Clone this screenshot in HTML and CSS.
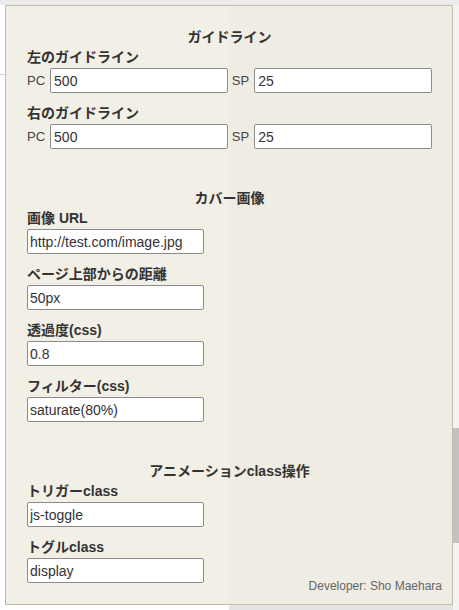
FILE: index.html
```html
<!DOCTYPE html>
<html lang="ja">
<head>
<meta charset="utf-8">
<title>Settings</title>
<link rel="stylesheet" href="styles.css">
</head>
<body>
<div class="page">
  <div class="topbar"></div>
  <div class="content">
    <div class="col-left"><div class="rule"></div></div>
    <div class="col-right"></div>
    <div class="scroll"><div class="thumb"></div></div>
  </div>
</div>

<div class="panel">
  <section class="sec">
    <h2 class="sec-title">ガイドライン</h2>
    <div class="field">
      <div class="label">左のガイドライン</div>
      <div class="pair">
        <span class="tag tag-pc">PC</span><input class="inp" type="text" value="500"><span class="tag tag-sp">SP</span><input class="inp" type="text" value="25">
      </div>
    </div>
    <div class="field">
      <div class="label">右のガイドライン</div>
      <div class="pair">
        <span class="tag tag-pc">PC</span><input class="inp" type="text" value="500"><span class="tag tag-sp">SP</span><input class="inp" type="text" value="25">
      </div>
    </div>
  </section>

  <section class="sec">
    <h2 class="sec-title">カバー画像</h2>
    <div class="field">
      <div class="label">画像 URL</div>
      <input class="inp inp-short" type="text" value="http://test.com/image.jpg">
    </div>
    <div class="field">
      <div class="label">ページ上部からの距離</div>
      <input class="inp inp-short" type="text" value="50px">
    </div>
    <div class="field">
      <div class="label">透過度(css)</div>
      <input class="inp inp-short" type="text" value="0.8">
    </div>
    <div class="field">
      <div class="label">フィルター(css)</div>
      <input class="inp inp-short" type="text" value="saturate(80%)">
    </div>
  </section>

  <section class="sec">
    <h2 class="sec-title">アニメーションclass操作</h2>
    <div class="last-row">
      <div class="fields">
        <div class="field">
          <div class="label">トリガーclass</div>
          <input class="inp inp-short" type="text" value="js-toggle">
        </div>
        <div class="field">
          <div class="label">トグルclass</div>
          <input class="inp inp-short" type="text" value="display">
        </div>
      </div>
      <div class="credit">Developer: Sho Maehara</div>
    </div>
  </section>
</div>
</body>
</html>
```

FILE: styles.css
```css
* { box-sizing: border-box; }
html, body { margin: 0; padding: 0; }
body {
  width: 459px;
  height: 610px;
  overflow: hidden;
  background: #fff;
  font-family: "Liberation Sans", "Noto Sans CJK JP", sans-serif;
  color: #333;
}

/* background page */
.page { display: flex; flex-direction: column; height: 610px; }
.topbar { height: 5px; background: #ebebeb; }
.content { flex: 1; display: flex; }
.col-left { width: 229px; background: #fff; }
.col-left .rule { height: 70px; border-bottom: 1px solid #d4d4d4; }
.col-right { flex: 1; background: #e4e4e4; }
.scroll { width: 6px; background: #f3f3f3; display: flex; flex-direction: column; }
.thumb { margin-top: 423px; height: 115px; background: #c1c1c1; }

/* overlay panel */
.panel {
  position: absolute;
  top: 5px;
  left: 5px;
  width: 448px;
  border: 1px solid #c4bda6;
  background: rgba(240, 237, 226, 0.88);
  padding: 21px 20px 11px 21px;
}
.sec { display: flow-root; }
.sec + .sec { margin-top: 29px; }
.sec-title {
  margin: 0;
  font-size: 14px;
  line-height: 20px;
  font-weight: bold;
  text-align: center;
  color: #333;
}
.field { margin-bottom: 10px; }
.label {
  font-size: 14px;
  line-height: 20px;
  font-weight: bold;
  color: #333;
  margin-bottom: 1px;
}
.pair { display: flex; align-items: center; }
.tag { font-size: 13px; color: #444; line-height: 25px; }
.tag-pc { margin-right: 5px; }
.tag-sp { margin: 0 5px 0 4px; }
.pair .inp { flex: 1; min-width: 0; }
.inp {
  display: block;
  height: 25px;
  margin: 0;
  padding: 0 3px;
  border: 1px solid #8c8c8c;
  border-radius: 2px;
  background: #fff;
  font-family: "Liberation Sans", "Noto Sans CJK JP", sans-serif;
  font-size: 14px;
  color: #333;
  outline: none;
}
.inp-short { width: 177px; padding: 0 2px; }

.last-row { display: flex; justify-content: space-between; align-items: flex-end; }
.credit {
  font-size: 12px;
  line-height: 14px;
  color: #666;
  margin: 0 -10px 0 0;
}
```
